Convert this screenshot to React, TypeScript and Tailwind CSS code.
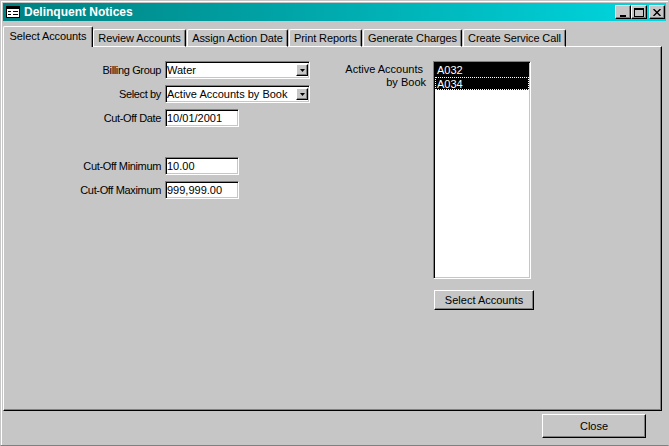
const TABS = [
  { label: "Select Accounts", width: "w-[90px]" },
  { label: "Review Accounts", width: "w-[93px]" },
  { label: "Assign Action Date", width: "w-[101px]" },
  { label: "Print Reports", width: "w-[73px]" },
  { label: "Generate Charges", width: "w-[99px]" },
  { label: "Create Service Call", width: "w-[103px]" },
];

const sunken = "border border-t-[#808080] border-l-[#808080] border-r-white border-b-white shadow-[inset_1px_1px_0_#000,inset_-1px_-1px_0_#c6c6c6] p-px";
const raised = "border border-t-white border-l-white border-r-black border-b-black shadow-[inset_-1px_-1px_0_#808080]";

function TextField({ value }: { value: string }) {
  return (
    <div className={`${sunken} w-[74px] h-[18px] bg-white`}>
      <div className="text-[11px] leading-[14px] text-black whitespace-nowrap">{value}</div>
    </div>
  );
}

function ComboField({ value }: { value: string }) {
  return (
    <div className={`${sunken} w-[145px] h-[18px] bg-white flex items-center justify-between`}>
      <div className="text-[11px] leading-[14px] text-black whitespace-nowrap">{value}</div>
      <div className={`${raised} w-[12px] h-[12px] bg-[#c6c6c6] flex items-center justify-center`}>
        <svg width="5" height="3" viewBox="0 0 5 3">
          <path d="M0 0h5L2.5 3z" fill="#000" />
        </svg>
      </div>
    </div>
  );
}

function Row({ label, mt, children }: { label: string; mt: string; children: React.ReactNode }) {
  return (
    <div className={`flex items-center ${mt}`}>
      <div className="w-[161px] pr-[4px] text-right text-[11px] leading-[14px] tracking-[-0.35px] text-black whitespace-nowrap">{label}</div>
      {children}
    </div>
  );
}

function WindowButton({ children, mr }: { children: React.ReactNode; mr: string }) {
  return (
    <div className={`${raised} ${mr} w-[16px] h-[14px] bg-[#c6c6c6] flex items-center justify-center`}>
      {children}
    </div>
  );
}

export default function App() {
  return (
    <div className="w-[669px] h-[446px] bg-[#c6c6c6] overflow-hidden border border-b-[#808080] border-t-[#c6c6c6] border-l-[#c6c6c6] border-r-[#c6c6c6] shadow-[inset_1px_1px_0_#fff] font-['Liberation_Sans',sans-serif] flex flex-col">
      {/* Title bar */}
      <div className="mx-[2px] mt-[2px] h-[18px] shrink-0 bg-gradient-to-r from-[#008080] to-[#00d8e0] flex items-center pl-[3px] pr-px">
        <svg width="14" height="12" viewBox="0 0 14 12" className="shrink-0">
          <rect x="0.5" y="0.5" width="13" height="11" fill="#fff" stroke="#000" />
          <rect x="1" y="1" width="12" height="2" fill="#000" />
          <path d="M2 5h3v1H2zM2 8h3v1H2zM7 5h5v1H7zM7 8h5v1H7z" fill="#000" />
        </svg>
        <div className="ml-[4px] text-[12px] leading-[16px] font-bold text-white whitespace-nowrap">Delinquent Notices</div>
        <div className="ml-auto flex items-center">
          <WindowButton mr="mr-0">
            <svg width="8" height="9" viewBox="0 0 8 9">
              <rect x="1" y="7" width="6" height="2" fill="#000" />
            </svg>
          </WindowButton>
          <WindowButton mr="mr-[2px]">
            <svg width="10" height="9" viewBox="0 0 10 9">
              <path d="M0 0h10v9H0zM1 2v6h8V2z" fill="#000" fillRule="evenodd" />
            </svg>
          </WindowButton>
          <WindowButton mr="mr-0">
            <svg width="8" height="7" viewBox="0 0 8 7">
              <path d="M0.5 0L7.5 7M7.5 0L0.5 7" stroke="#000" strokeWidth="1.4" />
            </svg>
          </WindowButton>
        </div>
      </div>

      {/* Tab strip */}
      <div className="ml-[2px] mt-[5px] h-[21px] shrink-0 flex items-end relative z-10 -mb-px">
        {TABS.map((tab, i) => (
          <div
            key={tab.label}
            className={
              i === 0
                ? `${tab.width} h-[21px] bg-[#c6c6c6] border-t border-l border-r border-t-white border-l-white border-r-black shadow-[inset_-1px_0_0_#808080] rounded-t-[2px] pt-[2px] text-center text-[11px] leading-[14px] tracking-[-0.1px] text-black whitespace-nowrap`
                : `${tab.width} h-[18px] mr-px bg-[#c6c6c6] border-t border-l border-r border-t-white border-l-white border-r-black border-b border-b-white shadow-[inset_-1px_0_0_#808080] rounded-t-[2px] pt-[1px] text-center text-[11px] leading-[14px] tracking-[-0.1px] text-black whitespace-nowrap`
            }
          >
            {tab.label}
          </div>
        ))}
      </div>

      {/* Tab page */}
      <div className="ml-[2px] mr-[6px] h-[365px] shrink-0 border border-t-white border-l-white border-r-black border-b-black shadow-[inset_-1px_-1px_0_#808080] flex pt-[14px]">
        <div className="w-[320px] shrink-0 flex flex-col">
          <Row label="Billing Group" mt="mt-0">
            <ComboField value="Water" />
          </Row>
          <Row label="Select by" mt="mt-[6px]">
            <ComboField value="Active Accounts by Book" />
          </Row>
          <Row label="Cut-Off Date" mt="mt-[6px]">
            <TextField value="10/01/2001" />
          </Row>
          <Row label="Cut-Off Minimum" mt="mt-[30px]">
            <TextField value="10.00" />
          </Row>
          <Row label="Cut-Off Maximum" mt="mt-[6px]">
            <TextField value="999,999.00" />
          </Row>
        </div>
        <div className="w-[102px] shrink-0 pt-[2px] text-right text-[11px] leading-[13px] text-black">
          <div className="pr-[3px]">Active Accounts</div>
          <div>by Book</div>
        </div>
        <div className="ml-[7px] flex flex-col items-start">
          <div className={`${sunken} !p-0 w-[98px] h-[218px] bg-white`}>
            <div className="mx-px mt-px h-[14px] bg-black text-white text-[11px] leading-[14px] pl-[2px]">A032</div>
            <div className="mx-px h-[13px] bg-black text-white text-[11px] leading-[15px] pl-[2px] outline-1 -outline-offset-1 outline-dotted outline-white">A034</div>
          </div>
          <div className={`${raised} mt-[11px] ml-px w-[100px] h-[20px] bg-[#c6c6c6] flex items-center justify-center text-[11px] leading-[14px] text-black whitespace-nowrap`}>
            Select Accounts
          </div>
        </div>
      </div>

      {/* Footer */}
      <div className="flex justify-end pr-[22px] pt-[3px]">
        <div className={`${raised} w-[104px] h-[24px] bg-[#c6c6c6] flex items-center justify-center text-[11px] leading-[14px] text-black`}>
          Close
        </div>
      </div>
    </div>
  );
}
